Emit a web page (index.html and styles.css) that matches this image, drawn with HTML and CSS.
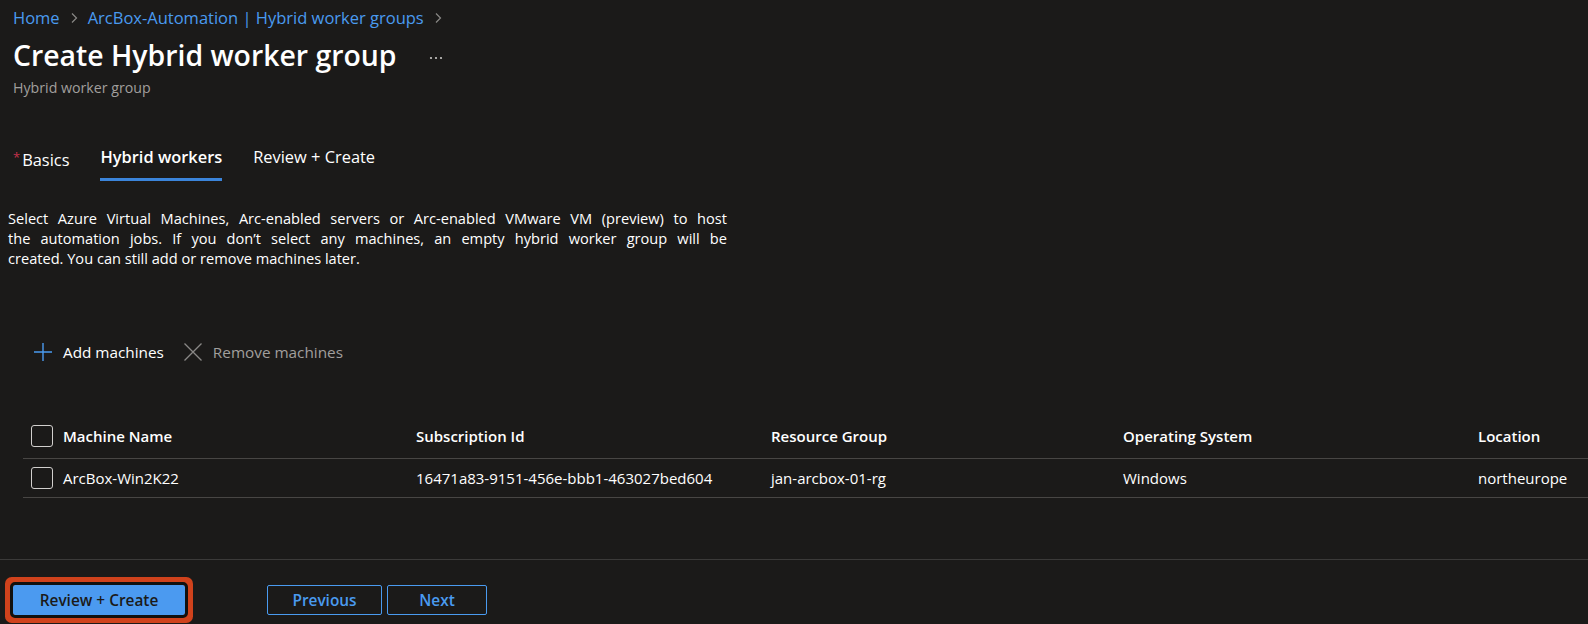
FILE: index.html
```html
<!DOCTYPE html>
<html lang="en">
<head>
<meta charset="utf-8">
<title>Create Hybrid worker group</title>
<link rel="stylesheet" href="styles.css">
</head>
<body>
<div class="page">
  <nav class="breadcrumb">
    <a class="crumb" href="#">Home</a>
    <svg class="chev" width="8" height="12" viewBox="0 0 8 12"><path d="M2 1.5 L6.5 6 L2 10.5" fill="none" stroke="#8a8886" stroke-width="1.2"/></svg>
    <a class="crumb" href="#">ArcBox-Automation | Hybrid worker groups</a>
    <svg class="chev" width="8" height="12" viewBox="0 0 8 12"><path d="M2 1.5 L6.5 6 L2 10.5" fill="none" stroke="#8a8886" stroke-width="1.2"/></svg>
  </nav>

  <header class="title-row">
    <h1 class="title">Create Hybrid worker group</h1>
    <span class="more" aria-label="More">
      <svg width="14" height="4" viewBox="0 0 14 4"><circle cx="2" cy="2" r="1.1" fill="#c8c6c4"/><circle cx="7" cy="2" r="1.1" fill="#c8c6c4"/><circle cx="12" cy="2" r="1.1" fill="#c8c6c4"/></svg>
    </span>
  </header>
  <div class="subtitle">Hybrid worker group</div>

  <div class="tabs">
    <div class="tab"><span class="req">*</span>Basics</div>
    <div class="tab active">Hybrid workers</div>
    <div class="tab">Review + Create</div>
  </div>

  <div class="desc">
    <span class="jl">Select Azure Virtual Machines, Arc-enabled servers or Arc-enabled VMware VM (preview) to host</span>
    <span class="jl">the automation jobs. If you don’t select any machines, an empty hybrid worker group will be</span>
    <span class="last">created. You can still add or remove machines later.</span>
  </div>

  <div class="toolbar">
    <div class="tool">
      <svg width="20" height="20" viewBox="0 0 20 20"><path d="M10 1 V19 M1 10 H19" stroke="#4a9bf0" stroke-width="1.4" fill="none"/></svg>
      <span>Add machines</span>
    </div>
    <div class="tool disabled">
      <svg width="20" height="20" viewBox="0 0 20 20"><path d="M1.5 1.5 L18.5 18.5 M18.5 1.5 L1.5 18.5" stroke="#8a8886" stroke-width="1.3" fill="none"/></svg>
      <span>Remove machines</span>
    </div>
  </div>

  <div class="grid">
    <div class="row head">
      <div class="cell first"><span class="check"></span>Machine Name</div>
      <div class="cell">Subscription Id</div>
      <div class="cell">Resource Group</div>
      <div class="cell">Operating System</div>
      <div class="cell">Location</div>
    </div>
    <div class="row">
      <div class="cell first"><span class="check"></span>ArcBox-Win2K22</div>
      <div class="cell">16471a83-9151-456e-bbb1-463027bed604</div>
      <div class="cell">jan-arcbox-01-rg</div>
      <div class="cell">Windows</div>
      <div class="cell">northeurope</div>
    </div>
  </div>

  <footer class="footer">
    <button class="btn primary">Review + Create</button>
    <div class="nav-btns">
      <button class="btn secondary prev">Previous</button>
      <button class="btn secondary next">Next</button>
    </div>
  </footer>
</div>
</body>
</html>
```

FILE: styles.css
```css
* { box-sizing: border-box; }
html, body {
  margin: 0;
  padding: 0;
  background: #1b1a19;
  color: #ffffff;
  font-family: "Open Sans", "Noto Sans", sans-serif;
}
.page {
  width: 1588px;
  height: 624px;
  overflow: hidden;
}
.breadcrumb {
  display: flex;
  align-items: center;
  gap: 8px;
  padding: 8px 0 0 13px;
  height: 28px;
  font-size: 16.5px;
  line-height: 20px;
}
.crumb {
  color: #4a9bf0;
  text-decoration: none;
}
.chev { margin: 0 2px; }
.title-row {
  display: flex;
  align-items: center;
  margin-top: 9px;
  padding-left: 13px;
  height: 36px;
}
.title {
  margin: 0;
  font-size: 28.4px;
  line-height: 36px;
  font-weight: 600;
}
.more {
  display: flex;
  margin-left: 33px;
  margin-top: 6px;
}
.subtitle {
  margin-top: 6px;
  padding-left: 13px;
  font-size: 14.2px;
  line-height: 18px;
  color: #a19f9d;
}
.tabs {
  display: flex;
  gap: 31px;
  margin-top: 50px;
  padding-left: 13px;
}
.tab {
  font-size: 16.4px;
  line-height: 20px;
  padding-bottom: 8px;
  border-bottom: 3px solid transparent;
}
.tab.active {
  font-weight: 600;
  border-bottom-color: #3b84da;
}
.req {
  color: #c4314b;
  font-size: 13px;
  margin-right: 2px;
  vertical-align: 4px;
}
.desc {
  margin-top: 27px;
  padding-left: 8px;
  width: 727px;
  font-size: 14.6px;
  line-height: 20px;
}
.desc .jl {
  display: block;
  text-align: justify;
  text-align-last: justify;
}
.desc .last { display: block; }
.toolbar {
  display: flex;
  align-items: center;
  gap: 19px;
  margin-top: 66px;
  padding-left: 33px;
  height: 36px;
  font-size: 15.3px;
}
.tool {
  display: flex;
  align-items: center;
  gap: 10px;
}
.tool.disabled { color: #a19f9d; }
.grid {
  margin-top: 43px;
  margin-left: 23px;
}
.row {
  display: grid;
  grid-template-columns: 393px 355px 352px 355px 1fr;
  align-items: center;
  height: 39px;
  border-bottom: 1px solid #484644;
  font-size: 15px;
}
.row.head {
  height: 46px;
  font-weight: 600;
}
.cell { white-space: nowrap; }
.cell.first {
  display: flex;
  align-items: center;
  gap: 10px;
  padding-left: 8px;
}
.check {
  width: 22px;
  height: 22px;
  border: 1px solid #d2d0ce;
  border-radius: 3px;
  flex: none;
}
.footer {
  margin-top: 61px;
  border-top: 1px solid #3b3a39;
  padding: 25px 0 0 13px;
  display: flex;
  gap: 82px;
}
.nav-btns {
  display: flex;
  gap: 5px;
}
.btn {
  height: 30px;
  font-family: inherit;
  font-size: 15.4px;
  font-weight: 600;
  border-radius: 2px;
  cursor: pointer;
}
.btn.primary {
  width: 172px;
  background: #4b9af0;
  color: #1b1a19;
  border: none;
  outline: 3px solid #111110;
  box-shadow: 0 0 0 8px #d0421c;
  border-radius: 2px;
}
.btn.secondary {
  background: transparent;
  border: 1px solid #4a9bf0;
  color: #4a9bf0;
}
.btn.prev { width: 115px; }
.btn.next { width: 100px; }
```
